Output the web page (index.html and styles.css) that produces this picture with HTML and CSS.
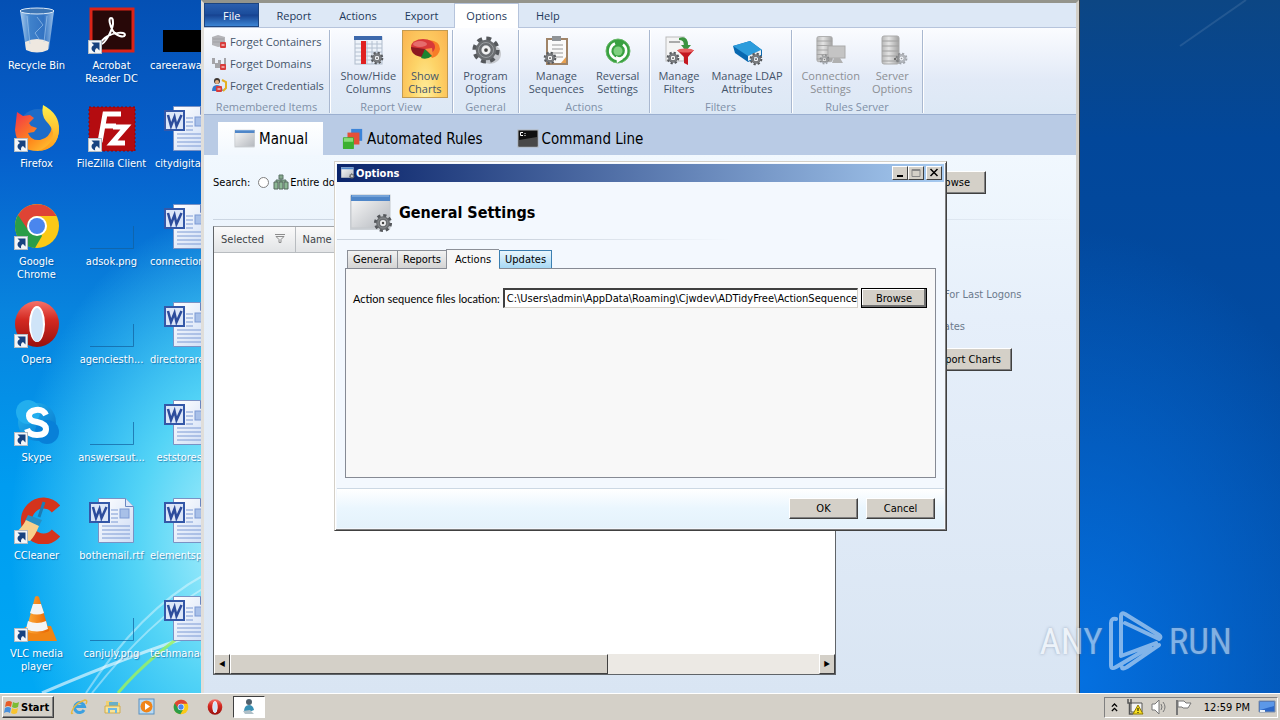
FILE: index.html
```html
<!DOCTYPE html>
<html lang="en">
<head>
<meta charset="utf-8">
<title>AD Tidy - Options</title>
<link rel="stylesheet" href="styles.css">
</head>
<body>
<svg class="defs" aria-hidden="true">
  <defs>
    <linearGradient id="gGrey" x1="0" y1="0" x2="1" y2="1"><stop offset="0" stop-color="#fafafa"/><stop offset="1" stop-color="#b4b8be"/></linearGradient>
    <linearGradient id="gPage" x1="0" y1="0" x2="1" y2="1"><stop offset="0" stop-color="#fff"/><stop offset="1" stop-color="#cddcf5"/></linearGradient>
    <linearGradient id="gServer" x1="0" x2="1"><stop offset="0" stop-color="#b8b8b8"/><stop offset=".4" stop-color="#e4e4e4"/><stop offset="1" stop-color="#a2a2a2"/></linearGradient>
    <linearGradient id="gFire" x1="0" y1="0" x2="1" y2="1"><stop offset="0" stop-color="#f0324c"/><stop offset=".55" stop-color="#ff8a1c"/><stop offset="1" stop-color="#ffd93a"/></linearGradient>
    <linearGradient id="gYellow" x1="0" y1="0" x2="0" y2="1"><stop offset="0" stop-color="#fff04a"/><stop offset="1" stop-color="#ff9a1c"/></linearGradient>
    <linearGradient id="gOpera" x1="0" y1="0" x2="0" y2="1"><stop offset="0" stop-color="#f4726a"/><stop offset=".4" stop-color="#d42a22"/><stop offset="1" stop-color="#98100c"/></linearGradient>
    <linearGradient id="gBin" x1="0" x2="1"><stop offset="0" stop-color="#c8e2f8"/><stop offset=".3" stop-color="#4a8ace"/><stop offset=".7" stop-color="#3a78c4"/><stop offset="1" stop-color="#b4d4f2"/></linearGradient>
    <linearGradient id="gSky" x1="0" y1="0" x2="1" y2="1"><stop offset="0" stop-color="#25b6f0"/><stop offset="1" stop-color="#0474cc"/></linearGradient>
    <linearGradient id="gCone" x1="0" x2="1"><stop offset="0" stop-color="#ffae3a"/><stop offset="1" stop-color="#e86400"/></linearGradient>
    <symbol id="gear" viewBox="0 0 32 32">
      <circle cx="16" cy="16" r="12" fill="none" stroke="#55585c" stroke-width="5" stroke-dasharray="5 4.42"/>
      <circle cx="16" cy="16" r="8" fill="none" stroke="#6a6d70" stroke-width="6"/>
      <circle cx="16" cy="16" r="8" fill="none" stroke="#9c9fa2" stroke-width="1"/>
      <circle cx="16" cy="16" r="4.500" fill="#f2f2f2"/><circle cx="16" cy="16" r="2" fill="#444"/>
    </symbol>
    <symbol id="arrow" viewBox="0 0 14 14">
      <rect x=".5" y=".5" width="13" height="13" fill="#f4f6f8" stroke="#b4bcc4"/>
      <path d="M3.500 2.500h8v8l-2.500-2.500c-2 1-2.300 2.500-1.800 4.500-4.800-1.700-4.500-6-1.200-7.500z" fill="#17427f"/>
    </symbol>
    <symbol id="word" viewBox="0 0 48 48">
      <path d="M10.500 2.500h27l8 8v36h-35z" fill="url(#gPage)" stroke="#7a92c4"/>
      <path d="M37.500 2.500v8h8" fill="#dce8fa" stroke="#6a86c0"/>
      <path d="M23 14h7M23 18h7M23 22h7M23 26h7M14 30h28M14 34h28M14 38h28M14 42h28" stroke="#7c9ad4"/>
      <rect x="32" y="13" width="9" height="9" fill="#a8c0e8" stroke="#7c9ad4"/>
      <rect x="2" y="7" width="19" height="19" fill="#dce6f8" stroke="#3458a8" stroke-width="2"/>
      <path d="M5 11l3 11 3.500-9 2 9 5-11" fill="none" stroke="#2c4c9c" stroke-width="2.500"/>
    </symbol>
    <symbol id="picture" viewBox="0 0 48 48">
      <path d="M45.500 24v22.500H2" fill="none" stroke="#12609c" stroke-opacity=".7"/>
    </symbol>
    <symbol id="chrome" viewBox="0 0 48 48">
      <circle cx="24" cy="24" r="22" fill="#fbc916"/>
      <path d="M24 24L5 13A22 22 0 0 0 22 46l7-12z" fill="#2a9d48"/>
      <path d="M5 13A22 22 0 0 1 43.500 14H24a10 10 0 0 0-9 14z" fill="#df4435"/>
      <circle cx="24" cy="24" r="10" fill="#fff"/><circle cx="24" cy="24" r="8" fill="#4a86ee"/>
    </symbol>
    <symbol id="opera" viewBox="0 0 48 48">
      <ellipse cx="24" cy="24" rx="22" ry="23" fill="url(#gOpera)"/>
      <ellipse cx="24" cy="24" rx="8" ry="18" fill="#fff"/>
      <ellipse cx="24" cy="25" rx="6" ry="17" fill="#cfe4f8"/>
    </symbol>
    <symbol id="window" viewBox="0 0 48 40">
      <path d="M3 3h40v34H3z" fill="#000" opacity=".15"/>
      <rect x="4" y="2" width="39" height="33" fill="url(#gGrey)" stroke="#c4c8cc"/>
      <rect x="4" y="2" width="39" height="6" fill="#4f86c8"/><path d="M5 3h37" stroke="#9cc0e8"/>
    </symbol>
    <symbol id="server" viewBox="0 0 20 32">
      <rect x="1" y="1" width="17" height="28" rx="2" fill="url(#gServer)" stroke="#aaa"/>
      <path d="M1 6h17M1 11h17M1 16h17M1 21h17M1 26h17" stroke="#a0a0a0"/><circle cx="14" cy="24" r="1" fill="#555"/>
    </symbol>
  </defs>
</svg>

<main class="desktop">
  <svg class="streaks" viewBox="0 0 1280 693" preserveAspectRatio="none" aria-hidden="true">
    <g fill="none" stroke="#fff">
      <path d="M42 693Q130 655 204 632" stroke-width="3" opacity=".6"/>
      <path d="M86 693Q140 610 204 575" stroke-width="2" opacity=".4"/>
      <path d="M92 693Q150 620 204 588" stroke-width="2" opacity=".4"/>
      <path d="M118 693Q150 655 204 620" stroke="#9af064" stroke-width="3" opacity=".85"/>
      <path d="M1180 46L1246 0" stroke-width="2" opacity=".1"/>
    </g>
  </svg>

  <ul class="icons">
    <li class="icon"><svg viewBox="0 0 48 48"><path d="M7 5h34l-5 38q-12 6-23 0z" fill="url(#gBin)" opacity=".85"/><ellipse cx="24" cy="5" rx="17" ry="3" fill="#3c74b4" stroke="#dceaf8"/><path d="M12 36q12 -6 24 0l-1 8q-11 5-22 0z" fill="#eee8e0"/><path d="M14 10l3 28M24 11l6 8-8 8 4 6M34 10l-3 26" stroke="#a8cdf0" stroke-opacity=".6" fill="none"/></svg><span>Recycle Bin</span></li>
    <li class="icon"><svg viewBox="0 0 48 48"><rect x="3" y="3" width="42" height="42" fill="#280808" stroke="#dc2418" stroke-width="3"/><path d="M23 12c-3 0-1 8 2 13 3 5 11 7 12 4 0-4-12-2-17 1-6 3-9 8-7 8 4 0 11-13 12-20 0-4 0-6-2-6z" fill="none" stroke="#fff" stroke-width="2"/><use href="#arrow" x="0" y="34" width="14" height="14"/></svg><span>Acrobat Reader DC</span></li>
    <li class="icon"><svg viewBox="0 0 48 48"><path d="M0 24h48v22H0z"/></svg><span>careeraway.png</span></li>

    <li class="icon"><svg viewBox="0 0 48 48"><circle cx="25" cy="24" r="19" fill="#1c6cc8"/><path d="M4 8l6 4 7-1 4 3-5 5 2 3 6 2-3 4-6 1q3 8 12 7 10-2 12-13l7 2q-1 20-21 22-21 0-23-21z" fill="url(#gFire)"/><path d="M30 1q17 9 16 25-1 19-20 21 14-7 14-18-1-6-7-12-5-6-3-16z" fill="url(#gYellow)"/><use href="#arrow" x="1" y="34" width="14" height="14"/></svg><span>Firefox</span></li>
    <li class="icon"><svg viewBox="0 0 48 48"><rect x="1" y="3" width="46" height="44" fill="#b40c10" stroke="#8c0408" stroke-dasharray="2 2"/><path d="M12 38l5-28h16M15 22h13M25 23h13l-14 16h13" fill="none" stroke="#fff" stroke-width="5"/><use href="#arrow" x="0" y="34" width="14" height="14"/></svg><span>FileZilla Client</span></li>
    <li class="icon"><svg><use href="#word"/></svg><span>citydigital.rtf</span></li>

    <li class="icon"><svg viewBox="0 0 48 48"><use href="#chrome" width="48" height="48"/><use href="#arrow" x="1" y="34" width="14" height="14"/></svg><span>Google Chrome</span></li>
    <li class="icon"><svg><use href="#picture"/></svg><span>adsok.png</span></li>
    <li class="icon"><svg><use href="#word"/></svg><span>connections.rtf</span></li>

    <li class="icon"><svg viewBox="0 0 48 48"><use href="#opera" width="48" height="48"/><use href="#arrow" x="1" y="34" width="14" height="14"/></svg><span>Opera</span></li>
    <li class="icon"><svg><use href="#picture"/></svg><span>agenciesth...</span></li>
    <li class="icon"><svg><use href="#word"/></svg><span>directorarea.rtf</span></li>

    <li class="icon"><svg viewBox="0 0 48 48"><circle cx="24" cy="24" r="19" fill="url(#gSky)"/><circle cx="15" cy="14" r="12" fill="#22aeee"/><circle cx="34" cy="34" r="12" fill="#0880d8"/><path d="M33 17q-3-6-10-5-7 1-7 6t8 6q9 2 9 7 0 6-9 6-8 0-10-6" fill="none" stroke="#fff" stroke-width="6"/><use href="#arrow" x="1" y="34" width="14" height="14"/></svg><span>Skype</span></li>
    <li class="icon"><svg><use href="#picture"/></svg><span>answersaut...</span></li>
    <li class="icon"><svg><use href="#word"/></svg><span>eststores.rtf</span></li>

    <li class="icon"><svg viewBox="0 0 48 48"><path d="M43 13A17 18 0 1 0 43 37" fill="none" stroke="#d4341c" stroke-width="11"/><path d="M31 6l-5 15" stroke="#1c7cb4" stroke-width="3"/><path d="M15 19l14 5-3 6-14-5z" fill="#2890c4"/><path d="M13 24l13 6q-4 10-9 15-10-1-16-7 8-6 12-14z" fill="#f8d08c"/><use href="#arrow" x="1" y="34" width="14" height="14"/></svg><span>CCleaner</span></li>
    <li class="icon"><svg><use href="#word"/></svg><span>bothemail.rtf</span></li>
    <li class="icon"><svg><use href="#word"/></svg><span>elementspa.rtf</span></li>

    <li class="icon"><svg viewBox="0 0 48 48"><path d="M12 33l26 -1 6 15H6z" fill="#f08414"/><path d="M22 3q2-2 4 0l10 34q-12 6-23 0z" fill="url(#gCone)"/><path d="M20 10h8l3 9q-7 3-14 0zM15 27q9 4 18 0l2 8q-11 5-22 0z" fill="#f4f4f4"/><use href="#arrow" x="1" y="34" width="14" height="14"/></svg><span>VLC media player</span></li>
    <li class="icon"><svg><use href="#picture"/></svg><span>canjuly.png</span></li>
    <li class="icon"><svg><use href="#word"/></svg><span>techmanage.rtf</span></li>
  </ul>

  <section class="window" aria-label="AD Tidy">
    <nav class="menu">
      <button class="menu-file">File</button>
      <button>Report</button>
      <button>Actions</button>
      <button>Export</button>
      <button class="menu-open">Options</button>
      <button>Help</button>
    </nav>

    <div class="ribbon">
      <section class="group">
        <div class="tools small">
          <button><svg viewBox="0 0 16 16"><path d="M1 4l6-2 7 2v9l-7 1-6-2z" fill="#b4b4b8"/><path d="M2 6h11M2 9h11" stroke="#a0a0a4"/><rect x="9" y="9" width="6" height="6" rx="1" fill="#d83c3c"/><path d="M10.500 12h3" stroke="#fff"/></svg>Forget Containers</button>
          <button><svg viewBox="0 0 16 16"><path d="M1 3h3v5h3V5h3v4h3V3h2v10H4V9H1z" fill="#a4a4a8"/><rect x="9" y="9" width="6" height="6" rx="1" fill="#d83c3c"/><path d="M10.500 12h3" stroke="#fff"/></svg>Forget Domains</button>
          <button><svg viewBox="0 0 16 16"><circle cx="6" cy="4" r="3" fill="#3c3430"/><circle cx="6" cy="5" r="2" fill="#e8b080"/><path d="M1 14q0-6 5-6t6 6z" fill="#3878c8"/><path d="M11 3l4 2v6l-3 3" fill="none" stroke="#e4b020" stroke-width="2"/><rect x="5" y="9" width="6" height="6" rx="1" fill="#d83c3c"/><path d="M6.500 12h3" stroke="#fff"/></svg>Forget Credentials</button>
        </div>
        <h2>Remembered Items</h2>
      </section>
      <section class="group">
        <div class="tools">
          <button><svg viewBox="0 0 32 32"><rect x="3" y="2" width="27" height="27" fill="#eef3fa" stroke="#b0bccc"/><path d="M3 9h27M3 13h27M3 17h27M3 21h27M3 25h27M15 6v23M20 6v23M25 6v23" stroke="#b4c0d0"/><path d="M2 1h28v4H2z" fill="#3c68ac"/><path d="M9 6h5v23H9z" fill="#e02020"/><use href="#gear" x="18" y="16" width="14" height="14"/></svg>Show/Hide<br>Columns</button>
          <button class="on"><svg viewBox="0 0 32 32"><path d="M18 15L20 5q11 1 11 9-1 7-8 9z" fill="#f87c28"/><ellipse cx="14" cy="12" rx="12" ry="8" fill="#d83838"/><path d="M2 12q0 9 12 10l2-8z" fill="#8c1820"/><path d="M16 14l7 7q-5 4-11 2z" fill="#1c8430"/><path d="M16 14l7-1 1 8z" fill="#f89040"/><ellipse cx="11" cy="9" rx="7" ry="3" fill="#f09090" opacity=".6"/></svg>Show<br>Charts</button>
        </div>
        <h2>Report View</h2>
      </section>
      <section class="group">
        <div class="tools"><button><svg viewBox="0 0 32 32"><ellipse cx="20" cy="19" rx="11" ry="10" fill="#8c8c8c" opacity=".4"/><use href="#gear" x="1" y="0" width="30" height="30"/></svg>Program<br>Options</button></div>
        <h2>General</h2>
      </section>
      <section class="group">
        <div class="tools">
          <button><svg viewBox="0 0 32 32"><rect x="6" y="3" width="22" height="27" fill="#a08468"/><rect x="8" y="5" width="18" height="23" fill="#fafafa"/><path d="M12 10h11M12 14h11M12 18h11M14 22h9" stroke="#989898"/><path d="M12 1h9v5h-9z" fill="#909498"/><path d="M21 28l5-6v6z" fill="#e8a050"/><use href="#gear" x="3" y="16" width="14" height="14"/></svg>Manage<br>Sequences</button>
          <button><svg viewBox="0 0 32 32"><circle cx="16" cy="16" r="12" fill="#38a040" stroke="#68b868" stroke-width="1"/><circle cx="16" cy="16" r="4.500" fill="#80d080"/><path d="M13 8.500a8 8 0 1 0 8 1" fill="none" stroke="#fff" stroke-width="2.500"/><path d="M14 21l7 3-6 4z" fill="#fff"/></svg>Reversal<br>Settings</button>
        </div>
        <h2>Actions</h2>
      </section>
      <section class="group">
        <div class="tools">
          <button><svg viewBox="0 0 32 32"><rect x="3" y="2" width="18" height="24" fill="#f4f4f4" stroke="#bbb"/><path d="M6 7h11" stroke="#aaa" stroke-width="2"/><path d="M16 3q9-3 9 7h3l-5 6-5-6h3q0-5-5-5z" fill="#3c9440"/><path d="M14 15h17l-6 7v8l-4-2v-6z" fill="#c41820"/><ellipse cx="22.500" cy="15.500" rx="8" ry="2" fill="#e86060"/><use href="#gear" x="3" y="16" width="14" height="14"/></svg>Manage<br>Filters</button>
          <button><svg viewBox="0 0 32 32"><path d="M2 11L19 6l12 9v6L17 27 4 18z" fill="#0868b0"/><path d="M2 11L19 6l12 9-14 6z" fill="#2c9cdc"/><path d="M17 21l13-6v5l-13 6z" fill="#f0f0f0"/><use href="#gear" x="18" y="17" width="14" height="14"/></svg>Manage LDAP<br>Attributes</button>
        </div>
        <h2>Filters</h2>
      </section>
      <section class="group">
        <div class="tools">
          <button disabled><svg viewBox="0 0 32 32"><use href="#server" x="1" y="0" width="18" height="30"/><rect x="13" y="11" width="17" height="12" fill="#c4c4c4" stroke="#aaa"/><path d="M19 23h6l3 5H17z" fill="#b0b0b0"/><use href="#gear" x="4" y="19" width="11" height="11" opacity=".5"/></svg>Connection<br>Settings</button>
          <button disabled><svg viewBox="0 0 32 32"><use href="#server" x="5" y="0" width="20" height="32"/><use href="#gear" x="19" y="17" width="13" height="13" opacity=".5"/></svg>Server<br>Options</button>
        </div>
        <h2>Rules Server</h2>
      </section>
    </div>

    <nav class="modes">
      <button class="mode current"><svg viewBox="0 0 48 40"><use href="#window" width="48" height="40"/></svg>Manual</button>
      <button class="mode"><svg viewBox="0 0 24 24"><rect x="10" y="1" width="12" height="13" fill="#3c84d8"/><rect x="6" y="5" width="13" height="13" fill="#e45038"/><rect x="1" y="10" width="12" height="13" rx="1" fill="#3cb030"/><path d="M2 11h10v4H2z" fill="#88dc78"/></svg>Automated Rules</button>
      <button class="mode"><svg viewBox="0 0 24 20"><rect x="2" y="1" width="20" height="17" fill="#101010" stroke="#b0b4b8"/><path d="M3 17V11l18-3v9z" fill="#484848"/><path d="M7 3.500H4.500v3H7M9 4v1M9 6v1" stroke="#fff" fill="none"/></svg>Command Line</button>
    </nav>

    <div class="page">
      <div class="search">
        <span>Search:</span>
        <input type="radio" id="whole" name="scope">
        <label for="whole"><svg viewBox="0 0 16 16"><path d="M6 1h4v4H6zM3 8V6h10v2M8 5v3" fill="#84a88c" stroke="#5c7468"/><path d="M1 8h4v7H1zM6 8h4v7H6zM11 8h4v7h-4z" fill="#8cb894" stroke="#54685c"/></svg>Entire domain</label>
        <button class="classic">Browse</button>
      </div>
      <div class="body">
        <div class="report">
          <table>
            <thead><tr><th scope="col" class="narrow">Selected <svg viewBox="0 0 10 9"><path d="M0 .5h10M1 2.500h8l-3 3v3H4v-3z" fill="none" stroke="#8c8c8c"/></svg></th><th scope="col">Name</th></tr></thead>
          </table>
          <div class="scroll" aria-hidden="true"><span class="knob">◀</span><span class="thumb"></span><span class="track"></span><span class="knob">▶</span></div>
        </div>
        <aside class="side">
          <p>For Last Logons</p>
          <p class="second">Updates</p>
          <button class="classic">Export Charts</button>
        </aside>
      </div>
    </div>
  </section>

  <section class="dialog" role="dialog" aria-labelledby="dlg">
    <header class="titlebar">
      <svg viewBox="0 0 48 40"><use href="#window" width="48" height="40"/><use href="#gear" x="28" y="20" width="20" height="20"/></svg>
      <h1 id="dlg">Options</h1>
      <button aria-label="Minimize"><svg viewBox="0 0 12 10"><path d="M3 8h6" stroke="#000" stroke-width="2"/></svg></button>
      <button aria-label="Maximize" disabled><svg viewBox="0 0 12 10"><path d="M2 1.500h8v7H2z M2 2.500h8" fill="none" stroke="#888"/></svg></button>
      <button class="close" aria-label="Close"><svg viewBox="0 0 12 10"><path d="M2.500 1l7 7M9.500 1l-7 7" stroke="#000" stroke-width="1.500"/></svg></button>
    </header>
    <div class="heading">
      <svg viewBox="0 0 48 40"><use href="#window" width="48" height="40"/><use href="#gear" x="26" y="20" width="20" height="20"/></svg>
      <h2>General Settings</h2>
    </div>
    <div class="sheet">
      <div class="tabs" role="tablist">
        <button role="tab">General</button>
        <button role="tab">Reports</button>
        <button role="tab" class="active" aria-selected="true">Actions</button>
        <button role="tab" class="hover">Updates</button>
      </div>
      <div class="panel">
        <label for="path">Action sequence files location:</label>
        <input type="text" id="path" value="C:\Users\admin\AppData\Roaming\Cjwdev\ADTidyFree\ActionSequence">
        <button class="classic default">Browse</button>
      </div>
    </div>
    <footer class="actions">
      <button class="classic">OK</button>
      <button class="classic">Cancel</button>
    </footer>
  </section>

  <div class="brand">
    <span>ANY</span>
    <svg viewBox="0 0 56 62"><path d="M8 8Q3 7 3 12v42q0 5 5 2l34-20M13 45V5q0-4 4-2l34 21q3 2 0 4L17 12M13 45L48 32M51 34L19 56q-5 3-5 0" fill="none" stroke="currentColor" stroke-width="4" stroke-linejoin="round" stroke-linecap="round"/></svg>
    <span>RUN</span>
  </div>
</main>

<footer class="taskbar">
  <button class="start"><svg viewBox="0 0 16 16"><path d="M2 3q3-2 6 0l-1 5q-3-2-6 0z" fill="#e85c28"/><path d="M9 3q3 2 6 0l-1 5q-3 2-6 0z" fill="#7cbc34"/><path d="M1 9q3-2 6 0l-1 5q-3-2-6 0z" fill="#4890dc"/><path d="M8 9q3 2 6 0l-1 5q-3 2-6 0z" fill="#f8c430"/></svg>Start</button>
  <div class="launch">
    <button aria-label="Internet Explorer"><svg viewBox="0 0 18 18"><path d="M14 12a5 5 0 1 1 .5-3.500H5" fill="none" stroke="#3ca0e0" stroke-width="3"/><path d="M3 15Q0 17 3 11T15 2q3 0 1 4" fill="none" stroke="#e8b840" stroke-width="1.500"/></svg></button>
    <button aria-label="Explorer"><svg viewBox="0 0 18 18"><path d="M2 3h6l1 2h7v10H2z" fill="#f0d070"/><path d="M5 4h9v5H5z" fill="#68b0c8"/><path d="M1 8h15v7H1z" fill="#f8e498" stroke="#d0ac50"/><path d="M5 15v-4h7v4" fill="none" stroke="#70b8e0" stroke-width="2"/></svg></button>
    <button aria-label="Media Player"><svg viewBox="0 0 18 18"><rect x="1" y="1" width="15" height="15" fill="#b8daf4" stroke="#5890c0"/><circle cx="8.500" cy="8.500" r="6" fill="#f08418"/><path d="M7 5l5 3.500L7 12z" fill="#fff"/></svg></button>
    <button aria-label="Chrome"><svg viewBox="0 0 18 18"><use href="#chrome" x="1" y="1" width="16" height="16"/></svg></button>
    <button aria-label="Opera"><svg viewBox="0 0 18 18"><use href="#opera" x="1" y="1" width="16" height="16"/></svg></button>
    <button class="running" aria-label="AD Tidy"><svg viewBox="0 0 18 18"><circle cx="9" cy="4" r="3" fill="#50606c"/><path d="M4 14q0-7 5-7 4 0 5 5l-5 2z" fill="#3890b4"/><path d="M3 13l7-1 4 4H5z" fill="#b0c0c8"/></svg></button>
  </div>
  <div class="tray">
    <svg class="chevrons" viewBox="0 0 8 10"><path d="M1 4l3-3 3 3M1 9l3-3 3 3" fill="none" stroke="#000" stroke-width="1.500"/></svg>
    <svg viewBox="0 0 18 18"><path d="M5 5h11v9H5z" fill="#f4f4f4" stroke="#555"/><path d="M2 1v4h3V1M3.500 5v11H7" fill="none" stroke="#555" stroke-width="1.500"/><path d="M12 7l5 9H7z" fill="#f8e020" stroke="#907800"/><path d="M12 10v3M12 14v1" stroke="#000"/></svg>
    <svg viewBox="0 0 18 18"><path d="M2 6h3l4-4v14l-4-4H2z" fill="#fff" stroke="#777"/><path d="M11 6q2 3 0 6M13 4q4 5 0 10" fill="none" stroke="#777"/></svg>
    <svg viewBox="0 0 18 18"><path d="M3 2v15" stroke="#777" stroke-width="2"/><path d="M4 3h6l2 2h5l-3 5H9L8 9H4z" fill="#fff" stroke="#777"/></svg>
    <time>12:59 PM</time>
    <svg viewBox="0 0 18 18"><path d="M1 3h16v11H1z" fill="#2c68c8" stroke="#8090a8"/><path d="M2 4h14v4L2 12z" fill="#5c98e8"/><path d="M2 13h5" stroke="#e8f0f8" stroke-width="2"/></svg>
  </div>
</footer>
</body>
</html>
```
FILE: styles.css
```css
* { box-sizing: border-box; }

:root {
  --face: #d4d0c8;
  --ui: "DejaVu Sans Condensed", "Noto Sans", sans-serif;
  --ribbon: "Open Sans", "Noto Sans", sans-serif;
}

body {
  margin: 0;
  height: 100vh;
  display: flex;
  flex-direction: column;
  overflow: hidden;
  font: 11px/13px var(--ui);
  color: #000;
}

h1, h2, p, ul { margin: 0; padding: 0; font: inherit; }
ul { list-style: none; }
button, input { font: inherit; color: inherit; margin: 0; }
button { border: 0; background: none; padding: 0; white-space: nowrap; }
svg { display: block; flex: none; }
.defs { position: absolute; width: 0; height: 0; }

/* Desktop */
.desktop {
  position: relative;
  flex: 1;
  min-height: 0;
  overflow: hidden;
  background:
    radial-gradient(ellipse 230px 330px at 240px 540px, #b4f2fc 0, #54d4f6 45%, #54d4f600 100%) no-repeat 0 0 / 640px 100%,
    linear-gradient(180deg, #0450b4 0, #0660cc 22%, #0884de 45%, #009cf0 70%, #00a8f4 100%) no-repeat 0 0 / 640px 100%,
    radial-gradient(ellipse 300px 450px at 1080px 680px, #0470e0 0, #0470e000 100%),
    linear-gradient(180deg, #0c4684 0, #02479a 20%, #0250ac 100%);
}
.streaks { position: absolute; inset: 0; width: 100%; height: 100%; }

.icons {
  position: relative;
  display: grid;
  grid-template-columns: repeat(3, 75px);
  grid-auto-rows: 98px;
  margin-left: -1px;
}
.icon {
  display: flex;
  flex-direction: column;
  align-items: center;
  gap: 5px;
  padding-top: 6px;
  color: #fff;
  text-align: center;
  text-shadow: 1px 1px 1px #00408088;
}
.icon svg { width: 48px; height: 48px; }
.icon span { max-width: 73px; }

/* Application window */
.window {
  position: absolute;
  inset: 0 201px 0 201px;
  display: flex;
  flex-direction: column;
  border: 3px solid var(--face);
  border-width: 3px 3px 0;
  border-top-color: #94948c;
  border-left-color: #e0deda;
  box-shadow: 1px 0 #404040;
  background: #dbe6f4;
}
.menu {
  display: flex;
  gap: 6px;
  height: 25px;
  border-bottom: 1px solid #b6c4dc;
  background: #dde8f6;
  font: 11px/15px var(--ribbon);
  color: #1e395b;
}
.menu button { padding: 0 11px; }
.menu .menu-file {
  padding: 0 18px;
  color: #fff;
  background: linear-gradient(#2c5fae, #1b4d9c 45%, #164290 50%, #3c84d4);
  border: 1px solid #1c4480;
}
.menu .menu-open {
  padding-bottom: 2px;
  background: #fff;
  border: 1px solid #b6c4dc;
  border-bottom: 0;
  margin: 0 0 -1px -1px;
}

.ribbon {
  display: grid;
  grid-template-columns: 126px 123px 66px 131px 142px 131px;
  height: 87px;
  padding: 2px 0 1px;
  border-bottom: 1px solid #9cb0d0;
  background: linear-gradient(#fbfcff, #e2eaf7 60%, #dce8f5);
  font: 11px/13px var(--ribbon);
  color: #44546a;
}
.group {
  display: flex;
  flex-direction: column;
  justify-content: space-between;
  border-right: 1px solid #a9b8d0;
  box-shadow: 1px 0 #fff;
}
.group h2 { text-align: center; color: #8090a8; }
.tools { display: flex; justify-content: center; }
.tools button {
  display: flex;
  flex-direction: column;
  align-items: center;
  height: 68px;
  padding: 4px 5px 2px;
  border: 1px solid transparent;
  line-height: 13px;
}
.tools svg { width: 32px; height: 32px; margin-bottom: 2px; }
.tools button:disabled { color: #8c8f94; }
.tools .on {
  border-color: #c29b52;
  background: radial-gradient(ellipse at 50% 100%, #fff0a0, #fdd468 45%, #fbb450);
}
.tools.small { flex-direction: column; justify-content: start; padding-left: 7px; }
.tools.small button { flex-direction: row; height: 22px; padding: 0; gap: 3px; border: 0; }
.tools.small svg { width: 16px; height: 16px; margin: 0; }

.modes {
  display: flex;
  gap: 3px;
  height: 40px;
  padding: 7px 14px 0;
  background: #b9cbe5;
  font: 15px/20px var(--ui);
}
.mode { display: flex; align-items: center; gap: 2px; padding: 0 15px; }
.mode svg { width: 24px; height: 22px; }
.current { background: linear-gradient(#fff, #f2f8fe); }

.page {
  flex: 1;
  min-height: 0;
  display: flex;
  flex-direction: column;
  padding: 15px 0 18px 9px;
  background: linear-gradient(#f1f8fe, #e6effa 30%, #d9e5f3);
}
.search { display: flex; align-items: center; height: 24px; gap: 8px; }
.search input { appearance: none; width: 11px; height: 11px; border: 1px solid #808080; border-radius: 50%; background: #fff; }
.search label { display: flex; align-items: center; gap: 1px; margin-left: -4px; }
.search label svg { width: 16px; height: 16px; }
.search .classic { margin: 0 90px 0 auto; }
.body {
  flex: 1;
  min-height: 0;
  display: grid;
  grid-template-columns: minmax(0, 1fr) 132px;
  column-gap: 108px;
  margin-top: 25px;
  border-top: 1px solid;
  border-image: linear-gradient(90deg, #ccd6e2 70%, #ccd6e200) 1;
  padding-top: 6px;
}
.report {
  display: flex;
  flex-direction: column;
  justify-content: space-between;
  background: #fff;
  border: 1px solid #606468;
  border-top-color: #a0a4a8;
}
.report table { width: 100%; border-collapse: collapse; table-layout: fixed; }
.report th {
  height: 25px;
  padding: 0 7px;
  text-align: left;
  font-weight: normal;
  color: #404448;
  border-right: 1px solid #b8bcc0;
  border-bottom: 1px solid #b8bcc0;
  background: linear-gradient(#fafafa, #e2e4e6);
}
.report .narrow { width: 81px; }
.report th svg { display: inline-block; width: 10px; height: 9px; margin-left: 8px; }
.scroll { display: flex; height: 20px; background: #ece9e4; }
.knob, .thumb { background: var(--face); border: 1px solid; border-color: #fff #404040 #404040 #fff; }
.knob { width: 16px; text-align: center; font-size: 8px; line-height: 17px; }
.thumb { flex: 64; }
.track { flex: 36; }
.side { padding-top: 62px; color: #6c7a8c; }
.side .second { margin: 19px 0 15px; text-indent: -20px; }
.side .classic { width: 90px; margin-left: -22px; }

.classic {
  height: 23px;
  min-width: 68px;
  padding: 0 8px;
  color: #000;
  background: var(--face);
  border: 1px solid;
  border-color: #fff #404040 #404040 #fff;
  box-shadow: inset -1px -1px #808080;
}

/* Options dialog */
.dialog {
  position: absolute;
  left: 334px;
  top: 161px;
  width: 613px;
  padding: 2px;
  display: flex;
  flex-direction: column;
  background: #f3f8fe;
  border: 1px solid;
  border-color: #d4d0c8 #404040 #404040 #d4d0c8;
  box-shadow: inset 1px 1px #fff, inset -1px -1px #808080;
}
.titlebar {
  display: flex;
  align-items: center;
  height: 18px;
  padding: 0 2px 0 3px;
  color: #fff;
  background: linear-gradient(90deg, #0a246a, #a6caf0);
}
.titlebar > svg { width: 15px; height: 14px; }
.titlebar h1 { flex: 1; font-weight: bold; padding-left: 1px; }
.titlebar button {
  width: 16px;
  height: 14px;
  padding: 1px;
  background: var(--face);
  border: 1px solid;
  border-color: #fff #404040 #404040 #fff;
}
.titlebar button svg { width: 12px; height: 10px; }
.titlebar .close { margin-left: 2px; }
.heading {
  display: flex;
  align-items: center;
  gap: 4px;
  height: 58px;
  padding: 4px 10px 0;
  border-bottom: 1px solid;
  border-image: linear-gradient(90deg, #ccd4de 30%, #ccd4de00 65%) 1;
}
.heading svg { width: 48px; height: 40px; }
.heading h2 { font: bold 16px/20px var(--ui); }
.sheet { padding: 9px 8px 10px; }
.tabs { display: flex; align-items: end; padding-left: 2px; }
.tabs button {
  height: 18px;
  padding: 0 5px;
  border: 1px solid #8c9098;
  border-width: 1px 0 0 1px;
  background: linear-gradient(#f2f2f2, #d4d4d4);
}
.tabs .active { height: 20px; padding: 0 8px; margin-bottom: -1px; background: #f8f8f8; position: relative; }
.tabs .hover { border: 1px solid #3c7fb1; border-bottom: 0; background: linear-gradient(#eaf6fd, #a7d9f5); }
.panel {
  display: flex;
  align-items: start;
  gap: 3px;
  height: 210px;
  padding: 19px 8px 19px 7px;
  border: 1px solid #868a94;
  background: #f8f8f8;
}
.panel label { line-height: 22px; white-space: nowrap; font-family: Lato, var(--ui); }
.panel input {
  flex: 1;
  min-width: 0;
  height: 20px;
  padding: 0 0 0 2px;
  border: 1px solid #d4d0c8;
  border-top: 2px solid #404040;
  border-left: 2px solid #404040;
  background: #fff;
}
.panel .classic { min-width: 66px; height: 20px; }
.classic.default { border: 1px solid #000; box-shadow: inset -2px -2px #707070, inset 1px 1px #fff; }
.actions {
  display: flex;
  justify-content: end;
  gap: 8px;
  height: 40px;
  padding: 9px;
  border-top: 1px solid #ccd8e4;
  background: linear-gradient(#fff, #eaf6fe 50%, #e4f2fb);
}
.actions .classic { height: 21px; min-width: 69px; }

.brand {
  position: absolute;
  right: 48px;
  bottom: 20px;
  display: flex;
  align-items: center;
  gap: 5px;
  color: #fff;
  opacity: .5;
  font: 37px/40px "Liberation Sans Narrow", "Roboto Condensed", "Open Sans Condensed", Roboto, sans-serif;
  text-shadow: 0 0 3px #60708c;
}
.brand svg { width: 56px; height: 62px; }

/* Taskbar */
.taskbar {
  display: flex;
  align-items: center;
  height: 27px;
  padding: 2px;
  background: var(--face);
  border-top: 1px solid #fff;
}
.start {
  display: flex;
  align-items: center;
  gap: 1px;
  height: 22px;
  padding: 0 4px 0 1px;
  font-weight: bold;
  border: 1px solid;
  border-color: #fff #404040 #404040 #fff;
  box-shadow: inset -1px -1px #808080;
}
.start svg { width: 16px; height: 16px; }
.launch { display: flex; align-items: center; gap: 16px; padding-left: 16px; }
.launch svg { width: 18px; height: 18px; }
.running { margin-left: -7px; padding: 1px 6px; background: #fff; border: 1px solid; border-color: #404040 #fff #fff #404040; }
.tray {
  display: flex;
  align-items: center;
  gap: 6px;
  height: 21px;
  margin-left: auto;
  padding: 0 1px 0 6px;
  border: 1px solid;
  border-color: #808080 #fff #fff #808080;
}
.tray svg { width: 18px; height: 18px; }
.tray .chevrons { width: 7px; height: 9px; margin-right: 2px; }
.tray time { padding: 0 2px 0 6px; }
```
